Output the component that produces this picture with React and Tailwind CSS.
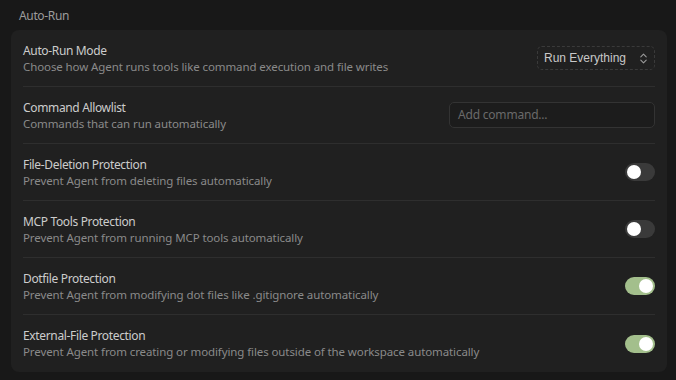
import { ChevronsUpDown } from 'lucide-react'

const rows = [
  { title: 'Auto-Run Mode', desc: 'Choose how Agent runs tools like command execution and file writes', control: 'select' },
  { title: 'Command Allowlist', desc: 'Commands that can run automatically', control: 'input' },
  { title: 'File-Deletion Protection', desc: 'Prevent Agent from deleting files automatically', control: 'off' },
  { title: 'MCP Tools Protection', desc: 'Prevent Agent from running MCP tools automatically', control: 'off' },
  { title: 'Dotfile Protection', desc: 'Prevent Agent from modifying dot files like .gitignore automatically', control: 'on' },
  {
    title: 'External-File Protection',
    desc: 'Prevent Agent from creating or modifying files outside of the workspace automatically',
    control: 'on',
  },
]

function Toggle({ on }) {
  return (
    <div
      className={`flex h-[18px] w-[30px] items-center rounded-full px-[2px] ${
        on ? 'justify-end bg-[#a3bf8c]' : 'justify-start bg-[#3a3a3a]'
      }`}
    >
      <div className="h-[14px] w-[14px] rounded-full bg-white" />
    </div>
  )
}

function Control({ type }) {
  if (type === 'select') {
    return (
      <div className="flex h-6 w-[118px] items-center justify-between rounded-[5px] border border-dashed border-[#3a3a3a] pl-[6px] pr-[4px] font-['Liberation_Sans',sans-serif] text-[12px] text-[#c8c8c8]">
        <span>Run Everything</span>
        <ChevronsUpDown className="h-[13px] w-[13px] text-[#9a9a9a]" strokeWidth={2} />
      </div>
    )
  }
  if (type === 'input') {
    return (
      <div className="flex h-[26px] w-[206px] items-center rounded-[5px] border border-[#333333] bg-[#1c1c1c] px-2 text-[12px] tracking-[-0.2px] text-[#6a6a6a]">
        Add command...
      </div>
    )
  }
  return <Toggle on={type === 'on'} />
}

export default function App() {
  return (
    <div className="h-[380px] w-[676px] bg-[#181818] pl-[11px] pr-[9px] pt-[7px] font-['Noto_Sans',sans-serif]">
      <div className="h-[23px] pl-2 text-[12px] leading-[18px] tracking-[-0.35px] text-[#9c9c9c]">Auto-Run</div>
      <div className="rounded-[8px] bg-[#202020] px-3">
        {rows.map((row, i) => (
          <div
            key={row.title}
            className={`flex h-[57px] items-center justify-between ${
              i < rows.length - 1 ? 'border-b border-[#2e2e2e]' : ''
            }`}
          >
            <div className="flex flex-col self-stretch pt-[12px]">
              <span className="text-[12px] leading-[18px] tracking-[-0.35px] text-[#cccccc]">{row.title}</span>
              <span className="text-[11.5px] leading-[14px] tracking-[-0.1px] text-[#8a8a8a]">{row.desc}</span>
            </div>
            <Control type={row.control} />
          </div>
        ))}
      </div>
    </div>
  )
}
